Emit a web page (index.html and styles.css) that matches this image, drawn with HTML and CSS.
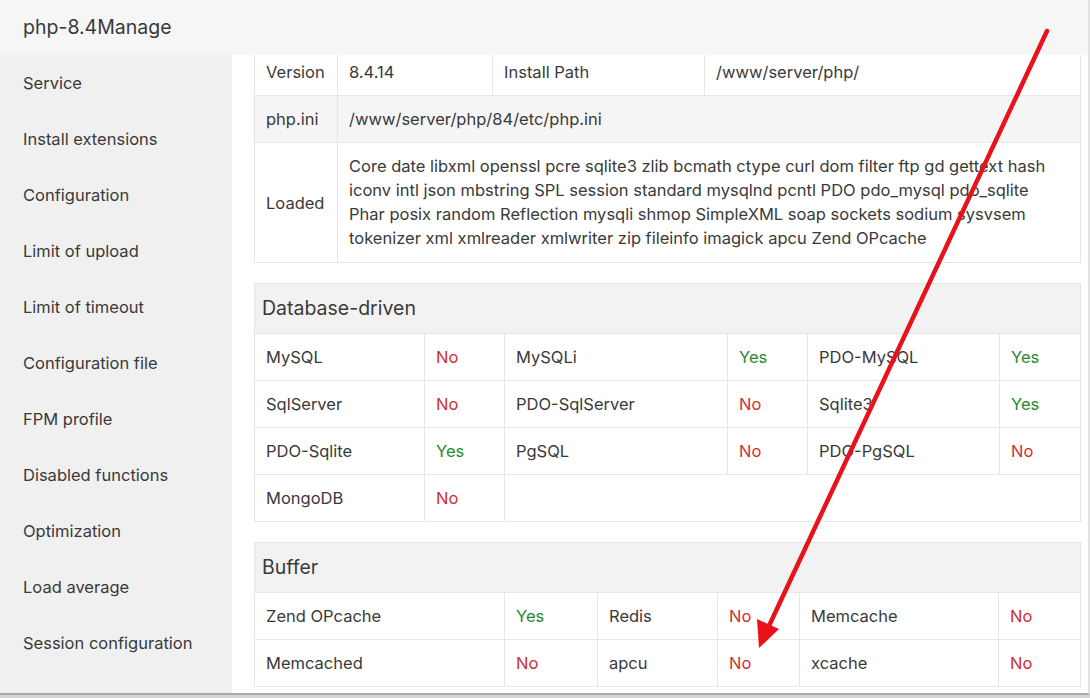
FILE: index.html
```html
<!DOCTYPE html>
<html lang="en">
<head>
    <meta charset="UTF-8">
    <title>php-8.4 Manage</title>
    <link rel="stylesheet" href="styles.css">
</head>
<body>
    <div class="window">
        <div class="title-bar">php-8.4Manage</div>
        <div class="layout">
            <ul class="side-menu">
                <li>Service</li>
                <li>Install extensions</li>
                <li>Configuration</li>
                <li>Limit of upload</li>
                <li>Limit of timeout</li>
                <li>Configuration file</li>
                <li>FPM profile</li>
                <li>Disabled functions</li>
                <li>Optimization</li>
                <li>Load average</li>
                <li>Session configuration</li>
                <li>Logs</li>
            </ul>
            <div class="content">
                <div class="scroll">
                    <table class="info">
                        <colgroup>
                            <col style="width:83px"><col style="width:155px"><col style="width:212px"><col>
                        </colgroup>
                        <tr>
                            <td>Version</td>
                            <td>8.4.14</td>
                            <td>Install Path</td>
                            <td>/www/server/php/</td>
                        </tr>
                        <tr class="grey">
                            <td>php.ini</td>
                            <td colspan="3">/www/server/php/84/etc/php.ini</td>
                        </tr>
                        <tr>
                            <td>Loaded</td>
                            <td colspan="3" class="loaded">Core date libxml openssl pcre sqlite3 zlib bcmath ctype curl dom filter ftp gd gettext hash iconv intl json mbstring SPL session standard mysqlnd pcntl PDO pdo_mysql pdo_sqlite Phar posix random Reflection mysqli shmop SimpleXML soap sockets sodium sysvsem tokenizer xml xmlreader xmlwriter zip fileinfo imagick apcu Zend OPcache</td>
                        </tr>
                    </table>

                    <table class="info">
                        <colgroup>
                            <col style="width:170px"><col style="width:80px"><col style="width:223px"><col style="width:80px"><col style="width:192px"><col>
                        </colgroup>
                        <tr><th colspan="6">Database-driven</th></tr>
                        <tr>
                            <td>MySQL</td><td class="no">No</td>
                            <td>MySQLi</td><td class="yes">Yes</td>
                            <td>PDO-MySQL</td><td class="yes">Yes</td>
                        </tr>
                        <tr>
                            <td>SqlServer</td><td class="no">No</td>
                            <td>PDO-SqlServer</td><td class="no">No</td>
                            <td>Sqlite3</td><td class="yes">Yes</td>
                        </tr>
                        <tr>
                            <td>PDO-Sqlite</td><td class="yes">Yes</td>
                            <td>PgSQL</td><td class="no">No</td>
                            <td>PDO-PgSQL</td><td class="no">No</td>
                        </tr>
                        <tr>
                            <td>MongoDB</td><td class="no">No</td>
                            <td colspan="4"></td>
                        </tr>
                    </table>

                    <table class="info">
                        <colgroup>
                            <col style="width:250px"><col style="width:93px"><col style="width:120px"><col style="width:82px"><col style="width:199px"><col>
                        </colgroup>
                        <tr><th colspan="6">Buffer</th></tr>
                        <tr>
                            <td>Zend OPcache</td><td class="yes">Yes</td>
                            <td>Redis</td><td class="no">No</td>
                            <td>Memcache</td><td class="no">No</td>
                        </tr>
                        <tr>
                            <td>Memcached</td><td class="no">No</td>
                            <td>apcu</td><td class="no">No</td>
                            <td>xcache</td><td class="no">No</td>
                        </tr>
                    </table>
                </div>
            </div>
        </div>
    </div>

    <!-- annotation arrow drawn over the page -->
    <svg class="arrow" width="1090" height="698" viewBox="0 0 1090 698">
        <line x1="1047" y1="31" x2="768" y2="628" stroke="#e8131a" stroke-width="4.5" stroke-linecap="round"/>
        <polygon points="759,648 779,629 757,619" fill="#e8131a"/>
    </svg>
</body>
</html>
```

FILE: styles.css
```css
body {
    margin: 0;
    background-color: #d4d4d4;
    font-family: Inter, "Noto Sans", Arial, sans-serif;
    color: #333;
}
.window {
    width: 1088px;
    height: 693px;
    background-color: #fff;
    border-right: 2px solid #e2e2e2;
    border-bottom: 2px solid #a9a9a9;
    display: flex;
    flex-direction: column;
    overflow: hidden;
}
.title-bar {
    height: 55px;
    flex-shrink: 0;
    background-color: #f6f6f6;
    padding-left: 23px;
    font-size: 19.5px;
    line-height: 54px;
    color: #3a3a3a;
}
.layout {
    flex: 1;
    display: flex;
    min-height: 0;
}
.side-menu {
    list-style: none;
    margin: 0;
    padding: 0;
    width: 232px;
    flex-shrink: 0;
    background-color: #f0f0f0;
    overflow: hidden;
}
.side-menu li {
    height: 56px;
    line-height: 56px;
    padding-left: 23px;
    font-size: 16.5px;
    color: #3a3a3a;
    white-space: nowrap;
}
.content {
    flex: 1;
    overflow: hidden;
    padding-left: 22px;
}
.scroll {
    margin-top: -7px;
    width: 827px;
}
.info {
    width: 827px;
    border-collapse: collapse;
    table-layout: fixed;
    margin-bottom: 20px;
    font-size: 16.5px;
}
.info td, .info th {
    border: 1px solid #e6e6e6;
    padding: 11px 11px;
    line-height: 24px;
    text-align: left;
    vertical-align: middle;
    color: #3a3a3a;
}
.info th {
    background-color: #f2f2f2;
    font-weight: normal;
    font-size: 19.5px;
    padding: 12px 7px;
    line-height: 25px;
}
.info tr.grey td {
    background-color: #f5f5f5;
}
.info td.loaded {
    padding: 11px 11px 12px;
}
.info td.no {
    color: #d12f2f;
}
.info td.yes {
    color: #258a2f;
}
.arrow {
    position: absolute;
    left: 0;
    top: 0;
    pointer-events: none;
}
```
